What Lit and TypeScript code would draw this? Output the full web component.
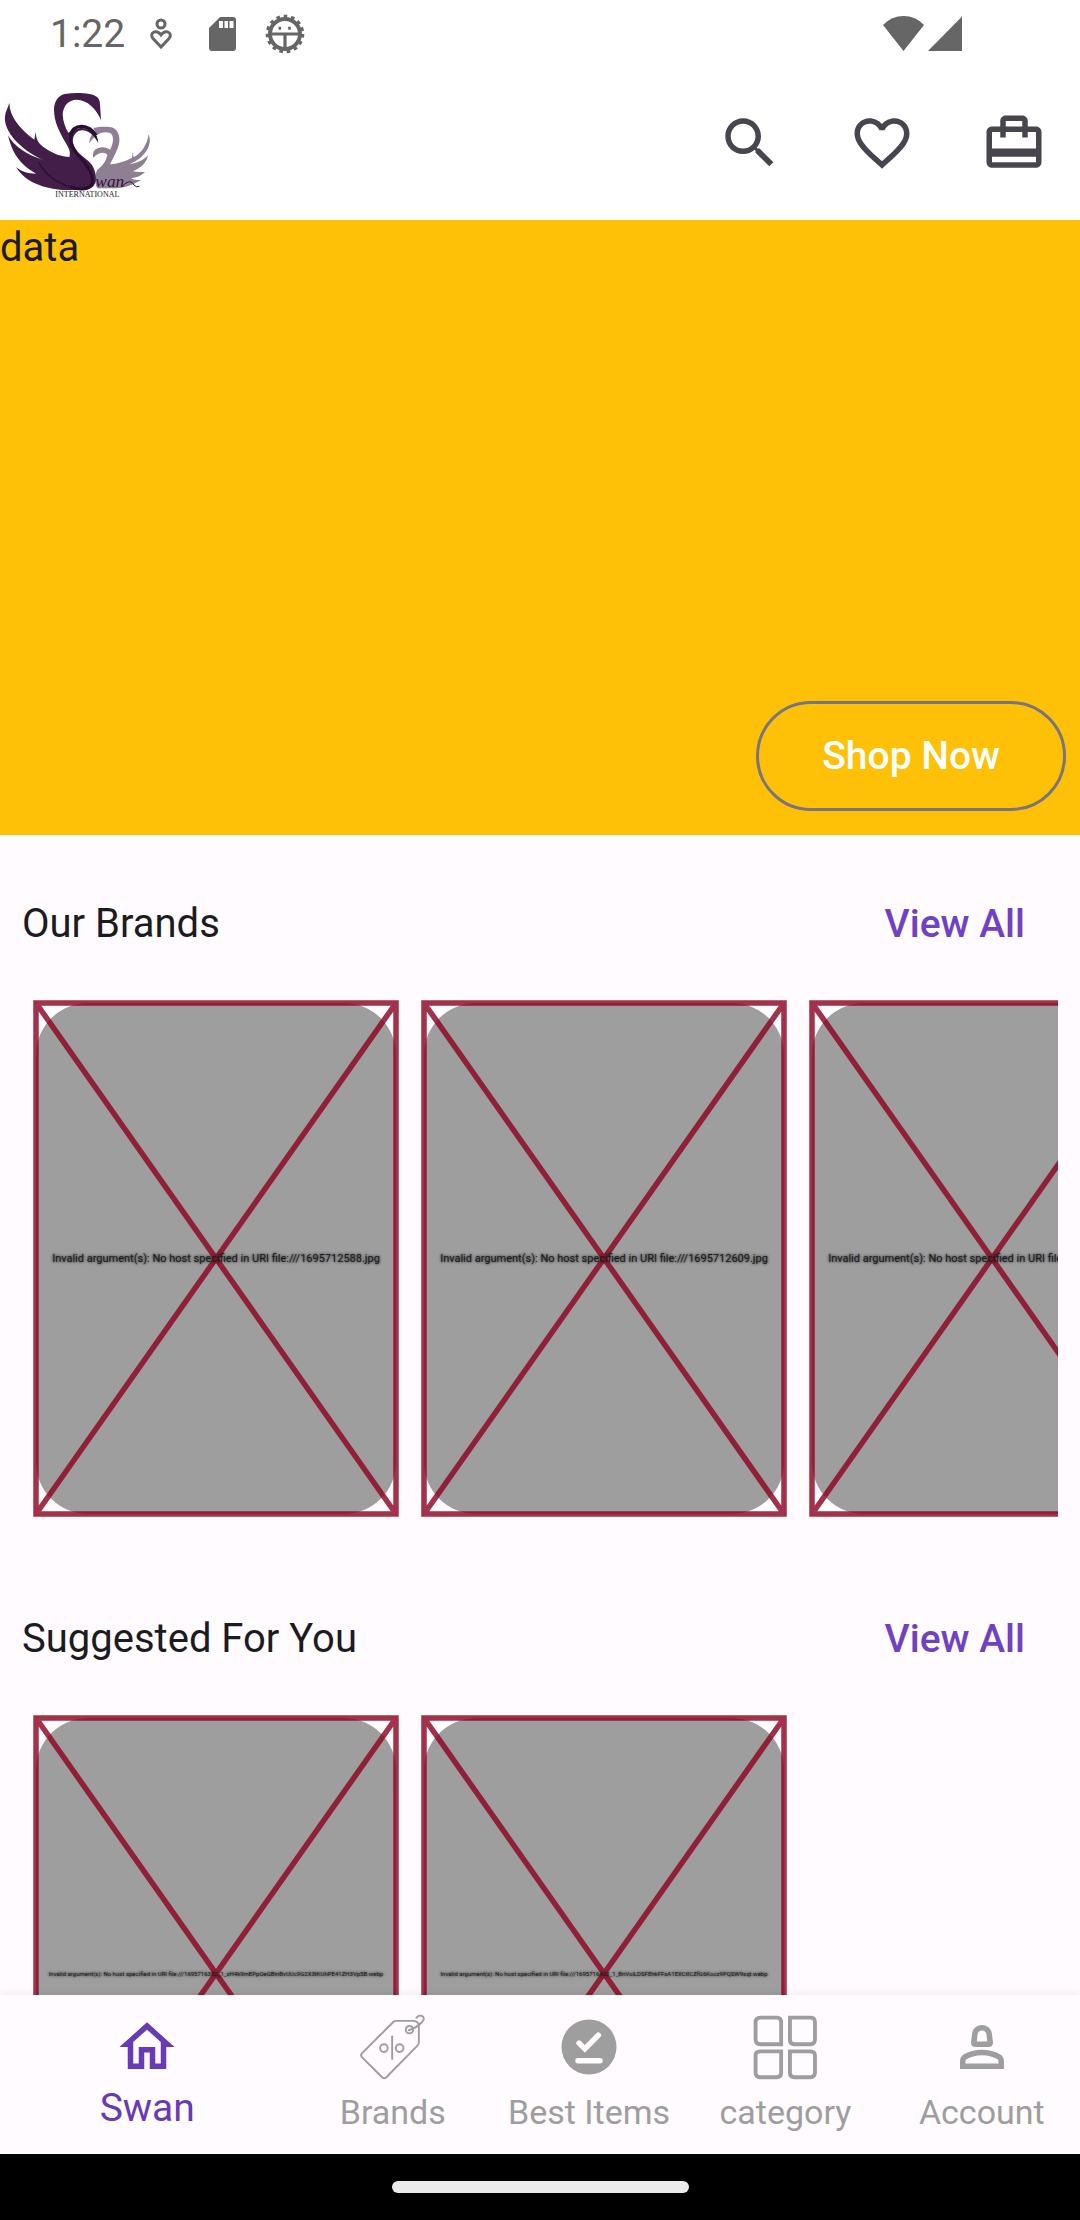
import { LitElement, html, svg, css } from "lit";
import { customElement, property } from "lit/decorators.js";

const icons = {
  search: svg`<path d="M15.5 14h-.79l-.28-.27C15.41 12.59 16 11.11 16 9.5 16 5.91 13.09 3 9.5 3S3 5.91 3 9.5 5.91 16 9.5 16c1.61 0 3.09-.59 4.23-1.57l.27.28v.79l5 4.99L20.49 19l-4.99-5zm-6 0C7.01 14 5 11.99 5 9.5S7.01 5 9.5 5 14 7.01 14 9.5 11.99 14 9.5 14z"/>`,
  heart: svg`<path d="M16.5 3c-1.74 0-3.41.81-4.5 2.09C10.91 3.81 9.24 3 7.5 3 4.42 3 2 5.42 2 8.5c0 3.78 3.4 6.86 8.55 11.54L12 21.35l1.45-1.32C18.6 15.36 22 12.28 22 8.5 22 5.42 19.58 3 16.5 3zm-4.4 15.55l-.1.1-.1-.1C7.14 14.24 4 11.39 4 8.5 4 6.5 5.5 5 7.5 5c1.54 0 3.04.99 3.57 2.36h1.87C13.46 5.99 14.96 5 16.5 5c2 0 3.5 1.5 3.5 3.5 0 2.89-3.14 5.74-7.9 10.05z"/>`,
  bag: svg`<path d="M20 6h-3V4c0-1.11-.89-2-2-2H9c-1.11 0-2 .89-2 2v2H4c-1.11 0-2 .89-2 2v11c0 1.11.89 2 2 2h16c1.11 0 2-.89 2-2V8c0-1.11-.89-2-2-2zM9 4h6v2H9V4zm11 15H4v-2h16v2zm0-5H4V8h3v2h2V8h6v2h2V8h3v6z"/>`,
  home: svg`<path d="M12 5.69l5 4.5V18h-2v-6H9v6H7v-7.81l5-4.5M12 3L2 12h3v8h6v-6h2v6h6v-8h3L12 3z"/>`,
  tag: svg`<g fill="none" stroke="currentColor" stroke-width=".7" stroke-linejoin="round" stroke-linecap="round">
    <path d="M12.2 2.8 .7 14.3q-.6.7 0 1.4l7.4 7.4q.7.6 1.4 0L20.9 11.5q.5-.5.5-1.2V4.6q0-2-2-2.1h-6.2q-.6 0-1 .3z"/>
    <circle cx="18" cy="5.7" r="1.35"/><path d="M17.8 5.9q2.6-.8 4.9-3.1c1.6-1.7-1-3.2-2.2-1.4"/>
    <path d="M11.7 8.2v8.2"/><circle cx="8.7" cy="12.4" r="1.4"/><circle cx="14.4" cy="12.4" r="1.4"/></g>`,
  pin: svg`<circle cx="12" cy="12" r="10"/><path d="M8.4 10.6l2.1 2.1 4.9-5M8 17h8" fill="none" stroke="#fffbff" stroke-width="2" stroke-linecap="round"/>`,
  grid: svg`<g fill="none" stroke="currentColor" stroke-width="1.4">
    <path d="M3 1.3h6q1.6 0 1.6 1.6v8.1H3Q1.3 11 1.3 9.3V3Q1.3 1.3 3 1.3z"/>
    <path d="M13.8 1.3h7.6q1.5 0 1.5 1.7v6.3q0 1.7-1.7 1.7h-5.8q-1.6 0-1.6-1.6z"/>
    <path d="M3 13.6h7.6v7.8q0 1.6-1.6 1.6H3q-1.7 0-1.7-1.6v-6.2q0-1.6 1.7-1.6z"/>
    <path d="M13.8 13.6h7.4q1.7 0 1.7 1.6v6q0 1.8-1.7 1.8h-5.8q-1.6 0-1.6-1.6z"/></g>`,
  person: svg`<path fill-rule="evenodd" d="M9.5 12h5c.95 0 1.66-.85 1.48-1.79l-.35-2.84C15.4 5.4 14 4 12 4S8.600 5.4 8.370 7.370l-.35 2.84C7.840 11.150 8.550 12 9.500 12zM10.350 7.600C10.450 6.600 11.050 6 12 6s1.550.6 1.650 1.600L13.900 10h-3.800zM18.390 14.560C16.710 13.700 14.530 13 12 13s-4.710.7-6.390 1.560C4.610 15.070 4 16.100 4 17.220V20h16v-2.780c0-1.120-.61-2.150-1.610-2.660zM18 18H6v-.78c0-.38.2-.72.52-.88C7.710 15.730 9.630 15 12 15s4.290.73 5.480 1.340c.32.16.52.5.52.88V18z"/>`,
};

const glyph = (shape: unknown) =>
  html`<svg class="icon" viewBox="0 0 24 24" fill="currentColor" aria-hidden="true">${shape}</svg>`;

const shared = css`
  :host {
    display: block;
  }
  .icon {
    display: block;
    width: 66px;
    height: 66px;
    flex: none;
  }
  button,
  a {
    font: inherit;
    color: inherit;
    text-decoration: none;
  }
  button {
    background: none;
    border: 0;
    padding: 0;
    margin: 0;
    cursor: pointer;
  }
`;

@customElement("status-bar")
class StatusBar extends LitElement {
  static styles = [
    shared,
    css`
      .bar {
        display: flex;
        align-items: center;
        box-sizing: border-box;
        height: 66px;
        padding: 2px 118px 0 50px;
        color: #666;
      }
      .time {
        font-size: 39px;
        line-height: 64px;
        margin-right: 24px;
      }
      .notes {
        display: flex;
        align-items: center;
        gap: 28px;
      }
      .person {
        margin-right: 8px;
      }
      .radio {
        display: flex;
        gap: 4px;
        margin-left: auto;
      }
      svg {
        display: block;
      }
    `,
  ];
  render() {
    return html`<div class="bar">
      <span class="time">1:22</span>
      <span class="notes">
        <svg class="person" width="24" height="34" viewBox="0 0 24 34" fill="none" stroke="currentColor" stroke-width="3" aria-hidden="true">
          <circle cx="12" cy="7" r="4"/>
          <path d="M12 30 4 21.500C-.5 16 7.500 11.500 12 17.800 16.500 11.500 24.500 16 20 21.500z"/>
        </svg>
        <svg width="28" height="34" viewBox="0 0 28 34" fill="currentColor" aria-hidden="true">
          <path fill-rule="evenodd" d="M11 0h13q3 0 3 3v28q0 3-3 3H3q-3 0-3-3V11zM10 4v7h4V4zm5.500 0v7h3.500V4zm5 0v7h4V4z"/>
        </svg>
        <svg width="40" height="40" viewBox="0 0 40 40" fill="none" stroke="currentColor" aria-hidden="true">
          <circle cx="20" cy="20" r="15" stroke-width="4"/>
          <circle cx="20" cy="20" r="17.600" stroke-width="3.400" stroke-dasharray="3.600 3.770"/>
          <path d="M5 20h30M20 20v14" stroke-width="3.200"/>
          <path d="M14.800 12.800v3M24.500 12.800v3" stroke-width="2.600"/>
        </svg>
      </span>
      <span class="radio">
        <svg width="41" height="36" viewBox="0 0 41 36" fill="currentColor" aria-hidden="true">
          <path d="M0 9Q8.500 0 20.500 0T41 9L20.500 35z"/>
        </svg>
        <svg width="34" height="36" viewBox="0 0 34 36" fill="currentColor" aria-hidden="true">
          <path d="M34 .5V35H0z"/>
        </svg>
      </span>
    </div>`;
  }
}

@customElement("swan-logo")
class SwanLogo extends LitElement {
  static styles = [
    shared,
    css`
      svg {
        display: block;
        width: 160px;
        height: 125px;
      }
      .caption {
        font-family: "Liberation Serif", serif;
        font-size: 24px;
        fill: #222;
      }
      .script {
        font-family: "Liberation Serif", serif;
        font-style: italic;
        font-size: 52px;
        fill: #35103f;
      }
    `,
  ];
  render() {
    return html`<svg viewBox="0 0 480 375" role="img" aria-label="Swan International">
      <path fill="#8f7f93" d="M268 188C268 172 274 158 286 153L280 141C300 137 325 136 340 141 353 149 360 163 358 182 355 206 341 226 330 250 352 248 374 242 396 230L398 214 401 229C425 216 441 192 446 160 455 184 446 206 424 228 413 238 400 244 388 250 410 246 430 238 445 222 439 245 425 260 398 271 412 274 426 273 435 273 421 287 410 288 394 292 404 298 414 297 424 297 400 309 384 319 350 322H292C282 302 285 280 292 266 306 256 317 244 322 222 316 212 295 213 280 230 277 215 281 205 297 200 310 196 322 200 330 206 342 184 342 163 330 156 313 149 285 155 268 188z"/>
      <path fill="#421e49" d="M303 117C290 85 262 56 230 56 205 56 189 75 188 102 189 121 196 140 205 155L222 145 245 140 270 148 290 166 295 185C275 152 254 142 235 150 215 162 214 186 226 205 241 226 262 233 276 252 287 270 289 288 287 302 280 322 266 328 235 327H190C135 322 80 308 48 258 64 272 82 277 108 278 68 255 38 225 24 163 42 196 80 222 130 237 80 215 0 155 17 95L28 66C29 106 57 142 103 176L107 152C108 180 119 190 138 203 160 218 185 227 208 228 213 213 206 201 196 184 176 148 162 122 162 84 163 62 174 44 194 39 218 35 247 35 268 39 290 43 299 52 300 68z"/>
      <path fill="none" stroke="#2a0f33" stroke-width="10" d="M288 163C266 128 218 126 212 164 208 192 227 215 242 231 263 255 284 284 276 309 266 328 234 326 212 318"/>
      <path fill="#2a0f33" d="M295 185C292 160 276 136 245 131L242 140C265 142 280 154 295 185z"/>
      <path fill="none" stroke="#2a0f33" stroke-width="4" d="M214 319C170 305 134 278 116 244"/>
      <text class="script" x="286" y="319">wan</text>
      <path fill="none" stroke="#35103f" stroke-width="3" d="M366 316q26-26 36-4 6 8 16 4"/>
      <text class="caption" x="166" y="348">INTERNATIONAL</text>
    </svg>`;
  }
}

@customElement("broken-card")
class BrokenCard extends LitElement {
  @property() message = "";
  @property({ type: Boolean }) long = false;
  static styles = [
    shared,
    css`
      :host {
        flex: none;
        width: 360px;
      }
      .card {
        display: grid;
        place-items: center;
        height: 511px;
        border-radius: 52px;
        background: #9e9e9e;
      }
      .card > * {
        grid-area: 1 / 1;
      }
      .cross {
        width: 100%;
        height: 100%;
        overflow: visible;
      }
      .error {
        font-size: 11px;
        line-height: 16px;
        white-space: nowrap;
        color: #1c1b1f;
        text-shadow: 0 0 3px #000;
      }
      .error.long {
        font-size: 6px;
      }
    `,
  ];
  render() {
    return html`<div class="card">
      <svg class="cross" viewBox="0 0 360 511" preserveAspectRatio="none" aria-hidden="true">
        <path d="M0 0H360V511H0zL360 511M360 0 0 511" fill="none" stroke="#8d021f" stroke-opacity=".81" stroke-width="5.500"/>
      </svg>
      <span class="error ${this.long ? "long" : ""}">${this.message}</span>
    </div>`;
  }
}

@customElement("product-section")
class ProductSection extends LitElement {
  @property() heading = "";
  @property({ type: Boolean }) long = false;
  @property({ attribute: false }) files: string[] = [];
  static styles = [
    shared,
    css`
      .head {
        display: flex;
        align-items: center;
        justify-content: space-between;
        padding: 41px 22px 27px;
      }
      h2 {
        margin: 0;
        font-size: 40px;
        font-weight: 400;
        line-height: 52px;
        color: #1c1b1f;
      }
      .all {
        height: 96px;
        padding: 0 33px;
        font-size: 39px;
        font-weight: 500;
        color: #6f43c0;
      }
      .list {
        display: flex;
        gap: 28px;
        margin: 0 22px 32px;
        padding: 4px 14px;
        overflow: hidden;
      }
    `,
  ];
  render() {
    return html`<section>
      <div class="head">
        <h2>${this.heading}</h2>
        <button class="all">View All</button>
      </div>
      <div class="list">
        ${this.files.map(
          (f) => html`<broken-card
            ?long=${this.long}
            .message=${"Invalid argument(s): No host specified in URI file:///" + f}
          ></broken-card>`
        )}
      </div>
    </section>`;
  }
}

const tabs = [
  { label: "Swan", icon: icons.home, current: true },
  { label: "Brands", icon: icons.tag, current: false },
  { label: "Best Items", icon: icons.pin, current: false },
  { label: "category", icon: icons.grid, current: false },
  { label: "Account", icon: icons.person, current: false },
];

@customElement("app-root")
class AppRoot extends LitElement {
  static styles = [
    shared,
    css`
      :host {
        font-family: Roboto, "Liberation Sans", sans-serif;
      }
      .page {
        display: flex;
        flex-direction: column;
        height: 100vh;
        background: #fffbff;
      }
      .top {
        background: #fff;
      }
      .bar {
        display: flex;
        align-items: center;
        justify-content: space-between;
        height: 154px;
        color: #49454f;
      }
      .actions {
        display: flex;
      }
      .action {
        display: grid;
        place-items: center;
        width: 132px;
        height: 132px;
      }
      .content {
        flex: 1;
        min-height: 0;
        overflow: hidden;
      }
      .hero {
        display: flex;
        flex-direction: column;
        justify-content: space-between;
        height: 615px;
        background: #ffc107;
        color: #1c1b1f;
        font-size: 40px;
        line-height: 55px;
      }
      .shop {
        align-self: flex-end;
        height: 110px;
        margin: 0 14px 24px;
        padding: 0 63px;
        border: 3px solid #79747e;
        border-radius: 55px;
        font-size: 39px;
        font-weight: 500;
        color: #fff;
      }
      .tabs {
        position: relative;
        display: flex;
        height: 159px;
        background: #fffbff;
        box-shadow: 0 -1px 8px rgba(0, 0, 0, 0.08);
      }
      .tab {
        flex: 2 1 0;
        min-width: 0;
        display: flex;
        flex-direction: column;
        align-items: center;
        gap: 10px;
        padding-top: 19px;
        color: #9e9e9e;
        font-size: 34px;
        line-height: 44px;
        white-space: nowrap;
      }
      .tab.current {
        flex-grow: 3;
        gap: 4px;
        color: #673ab7;
        font-size: 39px;
        line-height: 48px;
      }
      .system {
        display: grid;
        place-items: center;
        height: 66px;
        background: #000;
      }
      .pill {
        width: 297px;
        height: 12px;
        border-radius: 6px;
        background: #ebebeb;
      }
    `,
  ];
  render() {
    return html`<div class="page">
      <header class="top">
        <status-bar></status-bar>
        <div class="bar">
          <swan-logo></swan-logo>
          <div class="actions">
            <button class="action" aria-label="Search">${glyph(icons.search)}</button>
            <button class="action" aria-label="Favourites">${glyph(icons.heart)}</button>
            <button class="action" aria-label="Bag">${glyph(icons.bag)}</button>
          </div>
        </div>
      </header>
      <main class="content">
        <div class="hero">
          <span>data</span>
          <button class="shop">Shop Now</button>
        </div>
        <product-section
          heading="Our Brands"
          .files=${["1695712588.jpg", "1695712609.jpg", "1695712621.jpg"]}
        ></product-section>
        <product-section
          heading="Suggested For You"
          long
          .files=${[
            "1695716382_1_xH4k9mEPpOeGBlnBvUUc9G2X3tKUhPE41ZH3Vp5B.webp",
            "1695716423_1_BnVoiLDSFEhkFFsA1EXCtICZfG6Kocz9PQSW9sqt.webp",
          ]}
        ></product-section>
      </main>
      <nav class="tabs">
        ${tabs.map(
          (t) => html`<a class="tab ${t.current ? "current" : ""}" href="#">${glyph(t.icon)}<span>${t.label}</span></a>`
        )}
      </nav>
      <div class="system"><div class="pill"></div></div>
    </div>`;
  }
}
